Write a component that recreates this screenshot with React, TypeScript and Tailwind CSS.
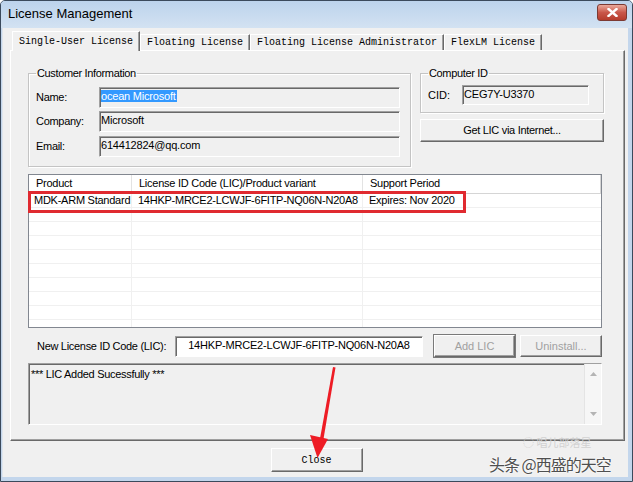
import React from "react";

const sans = "font-['Liberation_Sans',Arial,sans-serif]";
const mono = "font-['Liberation_Mono','Courier_New',monospace]";

// classic 3D edges
const sunkenGray =
  "bg-[#f0f0f0] border border-t-[#a0a0a0] border-l-[#a0a0a0] border-r-white border-b-white shadow-[inset_1px_1px_0_#696969]";
const sunkenWhite =
  "bg-white border border-t-[#a0a0a0] border-l-[#a0a0a0] border-r-white border-b-white shadow-[inset_1px_1px_0_#696969]";
const raised =
  "bg-[#f0f0f0] border border-t-white border-l-white border-r-[#696969] border-b-[#696969] shadow-[inset_-1px_-1px_0_#a0a0a0]";

const tabs = ["Single-User License", "Floating License", "Floating License Administrator", "FlexLM License"];

function GroupBox({
  title,
  className,
  children,
}: {
  title: string;
  className?: string;
  children: React.ReactNode;
}) {
  return (
    <fieldset className={`border border-[#c4c4c4] shadow-[inset_1px_1px_0_white,1px_1px_0_white] pl-[7px] ${className ?? ""}`}>
      <legend className="px-[1px] text-[11px] leading-[14px] tracking-[-0.35px]">{title}</legend>
      {children}
    </fieldset>
  );
}

function Field({ label, value, selected }: { label: string; value: string; selected?: boolean }) {
  return (
    <div className="flex items-center">
      <span className="w-[63px] text-[11px] tracking-[-0.3px]">{label}</span>
      <div className={`w-[301px] h-[21px] ${sunkenGray} pl-[1px] pt-[1px] text-[11px] leading-[15px]`}>
        <span className={`tracking-[-0.2px] pr-[1px] ${selected ? "bg-[#3399ff] text-white" : ""}`}>{value}</span>
      </div>
    </div>
  );
}

function ListView() {
  const rows = Array.from({ length: 10 });
  return (
    <div className="mt-[7px] w-[574px] h-[154px] border border-[#828790] bg-white overflow-hidden text-[11px] tracking-[-0.25px]">
      <div className="flex h-[19px] border-b border-[#d5d5d5] leading-[17px]">
        <div className="w-[103px] border-r border-[#e3e3e3] pl-[7px]">Product</div>
        <div className="w-[231px] border-r border-[#e3e3e3] pl-[7px]">License ID Code (LIC)/Product variant</div>
        <div className="w-[238px] border-r border-[#d5d5d5] pl-[7px]">Support Period</div>
      </div>
      {rows.map((_, i) => (
        <div key={i} className="flex h-[14px] border-b border-[#f0f0f0] leading-[13px]">
          <div className="w-[103px] border-r border-[#f0f0f0] pl-[5px] whitespace-nowrap">{i === 0 ? "MDK-ARM Standard" : ""}</div>
          <div className="w-[231px] border-r border-[#f0f0f0] pl-[6px] whitespace-nowrap">
            {i === 0 ? "14HKP-MRCE2-LCWJF-6FITP-NQ06N-N20A8" : ""}
          </div>
          <div className="w-[238px] pl-[6px] whitespace-nowrap">{i === 0 ? "Expires: Nov 2020" : ""}</div>
        </div>
      ))}
    </div>
  );
}

function ScrollArrow({ up }: { up?: boolean }) {
  return (
    <svg width="7" height="4" viewBox="0 0 7 4">
      <polygon points={up ? "0,4 7,4 3.5,0" : "0,0 7,0 3.5,4"} fill="#b4b4b4" />
    </svg>
  );
}

export default function App() {
  return (
    <div
      className={`relative w-[633px] h-[482px] flex flex-col bg-[#c3d6ec] border border-[#3b4a5c] rounded-t-[5px] overflow-hidden text-black ${sans}`}
    >
      {/* title bar */}
      <div className="h-[27px] flex items-start justify-between bg-linear-to-b from-[#bcd3ec] to-[#d3e2f2]">
        <span className="pl-[7px] pt-[5px] text-[13px] leading-[16px] text-black">License Management</span>
        <button className="mt-[3px] mr-[5px] w-[30px] h-[17px] rounded-[3px] border border-[#7c3a33] bg-linear-to-b from-[#e9a99c] via-[#c9574a] to-[#b53c2c] flex items-center justify-center">
          <svg width="11" height="9" viewBox="0 0 11 9">
            <path d="M1.5 1 L9.5 8 M9.5 1 L1.5 8" stroke="white" strokeWidth="2.4" strokeLinecap="square" />
          </svg>
        </button>
      </div>

      {/* client area */}
      <div className="flex-1 flex flex-col ml-[1px] mr-[4px] mb-[4px] bg-[#f0f0f0] border-l border-[#dfe6ee]">
        {/* tabs */}
        <div className={`h-[22px] flex items-end pl-[9px] ${mono} text-[10px]`}>
          {tabs.map((t, i) =>
            i === 0 ? (
              <div
                key={t}
                className="relative z-10 -mb-[1px] h-[20px] px-[6px] pt-[3px] bg-[#f0f0f0] border-t border-l border-white border-r border-r-[#696969] shadow-[inset_-1px_0_0_#a0a0a0] leading-[13px] whitespace-nowrap"
              >
                {t}
              </div>
            ) : (
              <div
                key={t}
                className="h-[16px] px-[6px] pt-[1px] border-t border-l border-white border-r border-r-[#696969] shadow-[inset_-1px_0_0_#a0a0a0] leading-[13px] whitespace-nowrap"
              >
                {t}
              </div>
            )
          )}
        </div>

        {/* tab page */}
        <div className="ml-[7px] mr-[3px] flex flex-col pl-[17px] pt-[15px] pb-[15px] border-t border-l border-white border-r border-b border-r-[#696969] border-b-[#696969] shadow-[inset_-1px_-1px_0_#a0a0a0]">
          <div className="flex items-start gap-[9px]">
            <GroupBox title="Customer Information" className="w-[383px] h-[101px] pr-[9px]">
              <div className="mt-[7px] flex flex-col gap-[3px]">
                <Field label="Name:" value="ocean Microsoft" selected />
                <Field label="Company:" value="Microsoft" />
                <div className="mt-[1px]">
                  <Field label="Email:" value="614412824@qq.com" />
                </div>
              </div>
            </GroupBox>

            <div className="flex flex-col w-[184px]">
              <GroupBox title="Computer ID" className="w-[184px] h-[47px]">
                <div className="mt-[5px] flex items-center">
                  <span className="w-[34px] text-[11px]">CID:</span>
                  <div className={`w-[127px] h-[20px] ${sunkenGray} pl-[1px] text-[11px] leading-[16px] tracking-[-0.2px]`}>
                    CEG7Y-U3370
                  </div>
                </div>
              </GroupBox>
              <button className={`mt-[6px] h-[23px] w-[184px] ${raised} text-[11px] tracking-[-0.3px] pb-[1px]`}>
                Get LIC via Internet...
              </button>
            </div>
          </div>

          <ListView />

          <div className="mt-[7px] flex items-center h-[22px]">
            <span className="w-[147px] pl-[9px] text-[11px] tracking-[-0.3px] whitespace-nowrap">New License ID Code (LIC):</span>
            <div className={`w-[248px] h-[21px] ${sunkenWhite} text-center text-[11px] leading-[17px] tracking-[-0.2px]`}>
              14HKP-MRCE2-LCWJF-6FITP-NQ06N-N20A8
            </div>
            <button
              className={`ml-[11px] w-[81px] h-[22px] ${raised} outline outline-1 outline-[#7a7a7a] text-[11px] text-[#a0a0a0]`}
            >
              Add LIC
            </button>
            <button className={`ml-[5px] w-[82px] h-[22px] ${raised} text-[11px] text-[#a0a0a0]`}>Uninstall...</button>
          </div>

          <div className={`mt-[6px] w-[574px] h-[62px] flex ${sunkenGray}`}>
            <div className="flex-1 pl-[2px] pt-[3px] text-[11px] leading-[14px] tracking-[-0.3px]">*** LIC Added Sucessfully ***</div>
            <div className="w-[17px] h-full flex flex-col items-center justify-between py-[8px] bg-[#f6f6f6] border-l border-[#e4e4e4]">
              <ScrollArrow up />
              <ScrollArrow />
            </div>
          </div>
        </div>

        {/* footer */}
        <div className="mt-[7px] flex justify-center pl-[2px]">
          <button className={`w-[92px] h-[24px] ${raised} ${mono} text-[10px]`}>Close</button>
        </div>
      </div>

      {/* annotations drawn over the screenshot */}
      <div className="absolute left-[27px] top-[190px] w-[438px] h-[22px] border-[3px] border-[#e02a30]" />
      <svg className="absolute left-0 top-0 pointer-events-none" width="633" height="482">
        <polygon points="332,366 334.5,366.5 322.5,438 319,437.5" fill="#ee1c25" />
        <polygon points="309,434 327,438 316.5,457" fill="#ee1c25" />
      </svg>
      <div className="absolute left-[522px] top-[436px] text-[11px] leading-[11px] text-[#d2d2d2] font-['Noto_Sans_CJK_SC',sans-serif]">
        ◌ 唱儿部落星
      </div>
      <div className="absolute left-[488px] top-[453px] text-[16px] leading-[20px] tracking-[-1px] text-[#4f4f4f] font-['Noto_Sans_CJK_SC',sans-serif] [text-shadow:0_0_2px_white,0_0_2px_white]">
        头条 @西盛的天空
      </div>
    </div>
  );
}
